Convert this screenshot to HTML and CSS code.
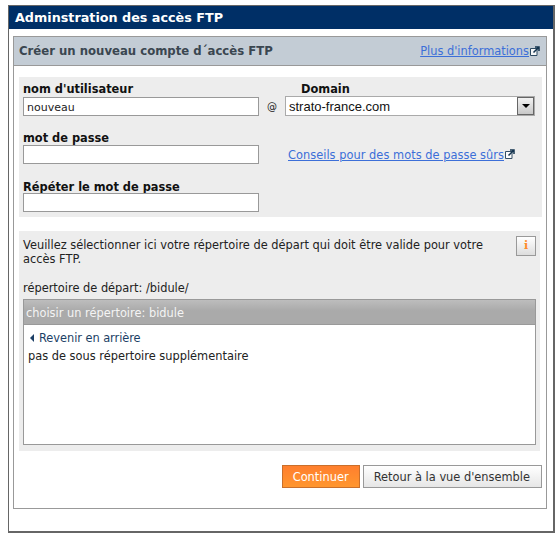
FILE: index.html
```html
<!DOCTYPE html>
<html lang="fr">
<head>
<meta charset="utf-8">
<title>Adminstration des accès FTP</title>
<link rel="stylesheet" href="styles.css">
</head>
<body>
<main class="frame">
  <h1 class="title">Adminstration des accès FTP</h1>
  <section class="panel">
    <header class="panel-head">
      <h2 class="panel-title">Créer un nouveau compte d´accès FTP</h2>
      <a class="link" href="#">Plus d'informations</a>
      <svg class="ext" viewBox="0 0 10 10"><path class="ext-box" d="M.5 2.500h6.500v7H.5z"/><path class="ext-arrow" d="M9 1 3.500 6.500M5 1h4v4"/></svg>
    </header>
    <form class="form">
      <div class="field">
        <label class="label">nom d'utilisateur</label>
        <input class="input" value="nouveau">
      </div>
      <span class="at">@</span>
      <div class="field">
        <label class="label label-domain">Domain</label>
        <div class="select">
          <span class="select-value">strato-france.com</span>
          <span class="select-btn"><i class="caret"></i></span>
        </div>
      </div>
      <div class="field">
        <label class="label label-mid">mot de passe</label>
        <input class="input" type="password">
      </div>
      <div class="tip">
        <a class="link" href="#">Conseils pour des mots de passe sûrs</a>
        <svg class="ext" viewBox="0 0 10 10"><path class="ext-box" d="M.5 2.500h6.500v7H.5z"/><path class="ext-arrow" d="M9 1 3.500 6.500M5 1h4v4"/></svg>
      </div>
      <div class="field">
        <label class="label label-low">Répéter le mot de passe</label>
        <input class="input" type="password">
      </div>
    </form>
    <section class="dir">
      <div class="dir-intro">
        <p class="dir-text">Veuillez sélectionner ici votre répertoire de départ qui doit être valide pour votre accès FTP.</p>
        <span class="info">i</span>
      </div>
      <p class="dir-current">répertoire de départ: /bidule/</p>
      <div class="browser">
        <div class="browser-head">choisir un répertoire: bidule</div>
        <div class="browser-body">
          <a class="back" href="#"><i class="back-arrow"></i>Revenir en arrière</a>
          <p class="empty">pas de sous répertoire supplémentaire</p>
        </div>
      </div>
    </section>
    <div class="actions">
      <button class="btn btn-primary" type="button">Continuer</button>
      <button class="btn btn-back" type="button">Retour à la vue d'ensemble</button>
    </div>
  </section>
</main>
</body>
</html>
```
FILE: styles.css
```css
* { box-sizing: border-box; }
html, body { margin: 0; background: #fff; }
body {
  padding: 5px 5px 4px 8px;
  font: 11.4px/14px "DejaVu Sans", Verdana, sans-serif;
  color: #222;
}
.frame {
  width: 547px;
  height: 528px;
  border: 1px solid #666;
  border-right-width: 2px;
  border-bottom-width: 2px;
}
.title {
  margin: 0;
  height: 23px;
  padding-left: 6px;
  background: #002f66;
  color: #fff;
  font-size: 12.75px;
  line-height: 23px;
  font-weight: bold;
}
.panel {
  margin: 7px 6px 0 4px;
  height: 473px;
  border: 1px solid #999;
}
.panel-head {
  display: flex;
  align-items: center;
  height: 29px;
  padding: 0 6px 0 5px;
  background: #c3ccd5;
  border-bottom: 1px solid #999;
}
.panel-title {
  margin: 0 auto 0 0;
  font-size: 11.7px;
  font-weight: bold;
  color: #3a4650;
}
.link { color: #3c6fd8; text-decoration: underline; }
.ext {
  flex: none;
  width: 10px;
  height: 10px;
  margin-left: 1px;
  fill: none;
  stroke: #14344f;
}
.ext-box { fill: #fff; stroke-width: 1; opacity: .85; }
.ext-arrow { stroke-width: 1.500; }
.form {
  display: grid;
  grid-template-columns: 236px 26px 250px;
  grid-template-rows: 48px 48px 48px;
  align-items: start;
  margin: 11px 4px 0 5px;
  height: 140px;
  padding: 4px 0 0 4px;
  background: #ededed;
}
.field { display: flex; flex-direction: column; }
.label { height: 16px; font-weight: bold; line-height: 16px; color: #111; white-space: nowrap; }
.label-mid { line-height: 18px; }
.label-low { line-height: 20px; }
.label-domain { padding-left: 16px; }
.input {
  width: 236px;
  height: 19px;
  padding: 1px 3px 0;
  border: 1px solid #999;
  background: #fff;
  font: 11px "DejaVu Sans", Verdana, sans-serif;
  color: #222;
  outline: none;
}
.at { padding-top: 19px; text-align: center; font-size: 10px; }
.select {
  display: flex;
  justify-content: space-between;
  width: 250px;
  height: 20px;
  margin-top: -1px;
  border: 1px solid #aaa;
  background: #fff;
}
.select-value {
  padding-left: 3px;
  font: 13px/20px "Liberation Sans", Arial, sans-serif;
  color: #111;
}
.select-btn {
  display: flex;
  align-items: center;
  justify-content: center;
  width: 17px;
  height: 18px;
  border: 1px solid #666;
  background: linear-gradient(#f2f2f2, #c8c8c8);
}
.caret {
  border: 4px solid transparent;
  border-top: 4px solid #000;
  border-bottom: 0;
}
.tip {
  display: flex;
  align-items: flex-start;
  grid-column: 2 / 4;
  padding: 19px 0 0 29px;
  white-space: nowrap;
}
.tip .link { letter-spacing: .03px; }
.tip .ext { margin-top: 1px; }
.dir {
  margin: 14px 6px 0 5px;
  height: 220px;
  padding: 5px 4px 0 4px;
  background: #ededed;
}
.dir-intro { display: flex; justify-content: space-between; height: 43px; }
.dir-text { margin: 0; width: 480px; padding-top: 2px; }
.info {
  width: 20px;
  height: 20px;
  border: 1px solid #999;
  background: linear-gradient(#fff, #ddd);
  color: #ff8c2a;
  font: bold 11px/18px "DejaVu Serif", serif;
  text-align: center;
}
.dir-current { margin: 0; height: 20px; padding-top: 2px; }
.browser { height: 146px; border: 1px solid #999; background: #fff; }
.browser-head {
  height: 25px;
  padding-left: 2px;
  border-bottom: 1px solid #999;
  background: linear-gradient(#bdbdbd, #aaa 45%);
  color: #f4f4f4;
  line-height: 26px;
}
.browser-body { padding: 5px 4px 0; }
.back {
  display: flex;
  align-items: center;
  height: 14px;
  margin-top: 1px;
  color: #1c3f66;
  text-decoration: none;
}
.back-arrow {
  width: 0;
  height: 0;
  margin: 0 5px 0 2px;
  border: 4px solid transparent;
  border-right: 4px solid #1c3f66;
  border-left: 0;
}
.back { letter-spacing: -.05px; }
.empty { margin: 4px 0 0; }
.actions {
  display: flex;
  justify-content: flex-end;
  gap: 3px;
  margin-top: 14px;
  padding-right: 4px;
}
.btn {
  height: 23px;
  padding: 0 10px;
  border: 1px solid #999;
  background: linear-gradient(#fff, #e6e6e6);
  color: #333;
  font: 11.4px "DejaVu Sans", Verdana, sans-serif;
}
.btn-back { padding-right: 11px; }
.btn-primary {
  width: 78px;
  padding: 0;
  border-color: #c96f2b;
  background: linear-gradient(#ff7f2e, #ff962e);
  color: #fff;
}
```
